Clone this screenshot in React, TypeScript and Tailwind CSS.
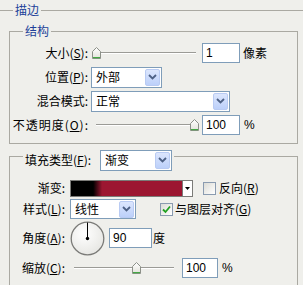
import React from "react";

function Thumb() {
  return (
    <svg width="9" height="12" viewBox="0 0 9 12" className="block">
      <defs>
        <linearGradient id="tg" x1="0" y1="0" x2="0" y2="1">
          <stop offset="0" stopColor="#ffffff" />
          <stop offset="1" stopColor="#e2e2da" />
        </linearGradient>
      </defs>
      <path d="M0.5 4.5 L4.5 0.5 L8.5 4.5 L8.5 11.5 L0.5 11.5 Z" fill="url(#tg)" stroke="#8c9088" />
      <path d="M1 10.6 H8" stroke="#45a845" strokeWidth="1.2" />
    </svg>
  );
}

function Slider({ wClass, thumbClass }: { wClass: string; thumbClass: string }) {
  return (
    <div className={`relative h-[12px] shrink-0 ${wClass}`}>
      <div className="absolute left-[4px] right-[4px] top-[5px] h-[2px] border-t border-[#9b9b96] bg-white" />
      <div className={`absolute top-0 ${thumbClass}`}>
        <Thumb />
      </div>
    </div>
  );
}

function Chevron() {
  return (
    <div className="mr-[1px] flex h-[17px] w-[15px] shrink-0 items-center justify-center rounded-[2px] border border-[#b9cbf3] bg-[linear-gradient(to_bottom,#dce6fd,#bcd0fa)]">
      <svg width="9" height="6" viewBox="0 0 9 6">
        <path d="M1 1 L4.5 4.5 L8 1" fill="none" stroke="#4d6185" strokeWidth="1.8" />
      </svg>
    </div>
  );
}

function Select({ cls, value }: { cls: string; value: string }) {
  return (
    <div className={`flex shrink-0 items-center border border-[#7f9db9] bg-white pl-[4px] ${cls}`}>
      <span className="flex-1 whitespace-nowrap">{value}</span>
      <Chevron />
    </div>
  );
}

function Input({ cls, value }: { cls: string; value: string }) {
  return (
    <div
      className={`flex h-[20px] shrink-0 items-center border border-[#7f9db9] bg-white pl-[3px] font-[family-name:'Liberation_Sans',Arial,sans-serif] text-[12px] ${cls}`}
    >
      {value}
    </div>
  );
}

function Check({ checked, cls }: { checked?: boolean; cls: string }) {
  return (
    <div
      className={`flex h-[13px] w-[13px] shrink-0 items-center justify-center border border-[#8a9bb0] bg-[linear-gradient(135deg,#dcdcd6,#ffffff)] ${cls}`}
    >
      {checked && (
        <svg width="9" height="9" viewBox="0 0 9 9">
          <path d="M1 4.5 L3.5 7 L8 1.5" fill="none" stroke="#21a121" strokeWidth="1.8" />
        </svg>
      )}
    </div>
  );
}

function Label({ cls, children }: { cls: string; children: React.ReactNode }) {
  return <div className={`flex shrink-0 justify-end whitespace-nowrap bg-[#efefeb] ${cls}`}>{children}</div>;
}

function U({ c }: { c: string }) {
  return <span className="underline underline-offset-[1px]">{c}</span>;
}

export default function App() {
  return (
    <div className="h-[285px] w-[303px] overflow-hidden bg-[#efefeb] pt-[10px] font-[family-name:'Noto_Sans_CJK_SC','Liberation_Sans',sans-serif] text-[12px] leading-[16px] text-black">
      {/* outer group 描边 */}
      <div className="relative border-t border-[#aaa9a2]">
        <div className="absolute -top-[9px] left-[13px] bg-[#efefeb] px-[2px] text-[#213f99]">描边</div>

        {/* group 结构 */}
        <div className="relative ml-[9px] mt-[20px] h-[113px] w-[289px] border border-[#aaa9a2] pt-[9px]">
          <div className="absolute -top-[9px] left-[13px] bg-[#efefeb] px-[2px] text-[#213f99]">结构</div>

          <div className="flex h-[24px] items-center">
            <Label cls="w-[78px]">
              大小(<U c="S" />):
            </Label>
            <Slider wClass="ml-[4px] w-[108px]" thumbClass="left-[0px]" />
            <Input cls="ml-[2px] w-[38px]" value="1" />
            <span className="ml-[3px]">像素</span>
          </div>

          <div className="flex h-[24px] items-center">
            <Label cls="w-[78px]">
              位置(<U c="P" />):
            </Label>
            <Select cls="ml-[3px] h-[21px] w-[71px]" value="外部" />
          </div>

          <div className="flex h-[24px] items-center">
            <Label cls="w-[78px]">混合模式:</Label>
            <Select cls="ml-[3px] h-[21px] w-[139px]" value="正常" />
          </div>

          <div className="flex h-[24px] items-center">
            <Label cls="w-[79px] -mr-[1px] tracking-[1px]">
              不透明度(<U c="O" />):
            </Label>
            <Slider wClass="ml-[4px] w-[108px]" thumbClass="left-[98px]" />
            <Input cls="ml-[2px] w-[38px]" value="100" />
            <span className="ml-[4px] font-[family-name:'Liberation_Sans',Arial,sans-serif]">%</span>
          </div>
        </div>

        {/* group 填充类型 */}
        <div className="relative ml-[9px] mt-[12px] h-[140px] w-[289px] border-x border-t border-[#aaa9a2] pt-[21px]">
          <div className="absolute -top-[8px] left-[13px] flex h-[22px] items-center bg-[#efefeb] px-[2px]">
            <span className="whitespace-nowrap">
              填充类型(<U c="F" />):
            </span>
            <Select cls="ml-[9px] h-[21px] w-[72px]" value="渐变" />
          </div>

          <div className="flex h-[20px] items-center">
            <Label cls="w-[55px]">渐变:</Label>
            <div className="ml-[5px] flex h-[17px] w-[123px] shrink-0 border border-[#7b7b78] bg-white">
              <div className="flex-1 bg-[linear-gradient(to_right,#000_0%,#000_20%,#9c1631_28%,#9c1631_100%)]" />
              <div className="flex w-[10px] items-center justify-center border-l border-[#7b7b78] bg-white">
                <svg width="5" height="3" viewBox="0 0 5 3">
                  <path d="M0 0 H5 L2.5 3 Z" fill="#000" />
                </svg>
              </div>
            </div>
            <Check cls="ml-[10px]" />
            <span className="ml-[3px] whitespace-nowrap">
              反向(<U c="R" />)
            </span>
          </div>

          <div className="flex h-[22px] items-center">
            <Label cls="w-[55px]">
              样式(<U c="L" />):
            </Label>
            <Select cls="ml-[5px] h-[20px] w-[66px]" value="线性" />
            <Check checked cls="ml-[24px]" />
            <span className="ml-[2px] whitespace-nowrap">
              与图层对齐(<U c="G" />)
            </span>
          </div>

          <div className="flex h-[36px] items-center">
            <Label cls="w-[55px]">
              角度(<U c="A" />):
            </Label>
            <svg width="35" height="35" viewBox="0 0 35 35" className="ml-[5px] shrink-0">
              <defs>
                <radialGradient id="dg" cx="0.4" cy="0.35" r="0.75">
                  <stop offset="0" stopColor="#ffffff" />
                  <stop offset="1" stopColor="#e4e4e0" />
                </radialGradient>
              </defs>
              <circle cx="17.5" cy="17.5" r="16.3" fill="url(#dg)" stroke="#7b7b78" strokeWidth="1.3" />
              <line x1="17.5" y1="1.5" x2="17.5" y2="17.5" stroke="#000" strokeWidth="1" />
              <circle cx="17.5" cy="17.5" r="1.7" fill="#000" />
            </svg>
            <Input cls="ml-[4px] w-[43px]" value="90" />
            <span className="ml-[1px]">度</span>
          </div>

          <div className="flex h-[24px] items-center">
            <Label cls="w-[55px]">
              缩放(<U c="C" />):
            </Label>
            <Slider wClass="ml-[5px] w-[108px]" thumbClass="left-[62px]" />
            <Input cls="ml-[4px] w-[36px]" value="100" />
            <span className="ml-[4px] font-[family-name:'Liberation_Sans',Arial,sans-serif]">%</span>
          </div>
        </div>
      </div>
    </div>
  );
}
